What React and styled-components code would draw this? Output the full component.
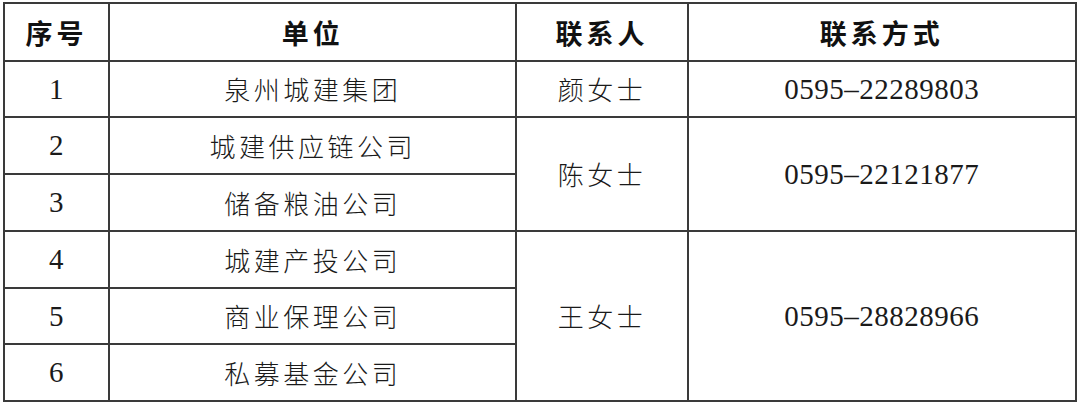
import React from "react";
import styled, { createGlobalStyle } from "styled-components";

const Global = createGlobalStyle`
  html, body { margin: 0; padding: 0; background: #fff; }
  body { font-family: "Noto Sans CJK SC", sans-serif; color: #1a1a1a; }
`;

const Page = styled.div`
  padding: 2px 3px 0 3px;
`;

const Table = styled.table`
  border-collapse: collapse;
  table-layout: fixed;
  width: 1074px;
  border: 2px solid #555;
`;

const Row = styled.tr`
  height: ${(p) => p.$h}px;
`;

const HeadCell = styled.th`
  border: 2px solid #3a3a3a;
  padding: 0;
  text-align: center;
  vertical-align: middle;
  font-family: "Noto Sans CJK SC", sans-serif;
  font-weight: 700;
  font-size: 27px;
  letter-spacing: 4px;
  line-height: 1;
  color: #111;
`;

const Cell = styled.td`
  border: 2px solid #3a3a3a;
  padding: 0;
  text-align: center;
  vertical-align: middle;
  line-height: 1;
  color: #1a1a1a;
  font-family: ${(p) =>
    p.$num ? '"Liberation Serif", "Times New Roman", serif' : '"Noto Sans CJK SC", sans-serif'};
  font-size: ${(p) => (p.$num ? 29 : 26)}px;
  font-weight: ${(p) => (p.$num ? 400 : 300)};
  letter-spacing: ${(p) => (p.$num ? 0.5 : 3.5)}px;
`;

const rows = [
  { n: "1", unit: "泉州城建集团", person: "颜女士", span: 1, tel: "0595–22289803" },
  { n: "2", unit: "城建供应链公司", person: "陈女士", span: 2, tel: "0595–22121877" },
  { n: "3", unit: "储备粮油公司" },
  { n: "4", unit: "城建产投公司", person: "王女士", span: 3, tel: "0595–28828966" },
  { n: "5", unit: "商业保理公司" },
  { n: "6", unit: "私募基金公司" },
];

const heights = [56, 57, 57, 57, 56, 57];

export default function App() {
  return (
    <Page>
      <Global />
      <Table>
        <colgroup>
          <col style={{ width: 105 }} />
          <col style={{ width: 407 }} />
          <col style={{ width: 171 }} />
          <col style={{ width: 388 }} />
        </colgroup>
        <thead>
          <Row $h={58}>
            <HeadCell>序号</HeadCell>
            <HeadCell>单位</HeadCell>
            <HeadCell>联系人</HeadCell>
            <HeadCell>联系方式</HeadCell>
          </Row>
        </thead>
        <tbody>
          {rows.map((r, i) => (
            <Row key={r.n} $h={heights[i]}>
              <Cell $num>{r.n}</Cell>
              <Cell>{r.unit}</Cell>
              {r.person && <Cell rowSpan={r.span}>{r.person}</Cell>}
              {r.tel && (
                <Cell $num rowSpan={r.span}>
                  {r.tel}
                </Cell>
              )}
            </Row>
          ))}
        </tbody>
      </Table>
    </Page>
  );
}
